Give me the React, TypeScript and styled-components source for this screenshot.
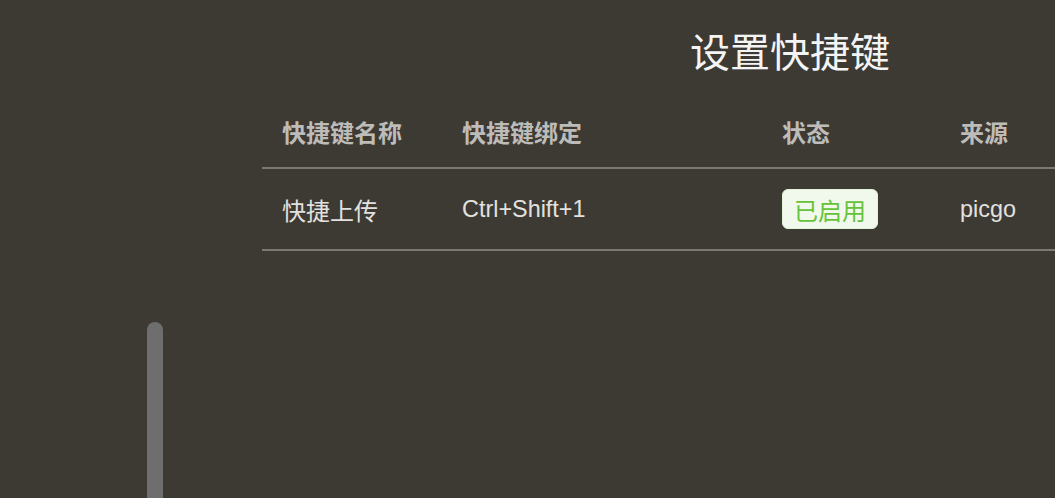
import React from "react";
import styled, { createGlobalStyle } from "styled-components";

const Global = createGlobalStyle`
  html, body { margin: 0; padding: 0; background: #3d3a34; overflow: hidden; }
  body { font-family: "Liberation Sans", "Noto Sans CJK SC", sans-serif; }
`;

const Page = styled.div`
  display: flex;
  width: 1055px;
  height: 498px;
  overflow: hidden;
  background: #3d3a34;
`;

const Sidebar = styled.aside`
  flex: 0 0 262px;
  display: flex;
  padding: 322px 0 0 147px;
  box-sizing: border-box;
`;

const ScrollThumb = styled.div`
  width: 16px;
  height: 220px;
  border-radius: 8px 8px 0 0;
  background: #6e6e6e;
`;

const Main = styled.main`
  flex: 0 0 1056px;
  display: flex;
  flex-direction: column;
`;

const Title = styled.h1`
  margin: 0;
  padding-top: 26px;
  height: 96px;
  box-sizing: border-box;
  text-align: center;
  font-family: "Noto Sans CJK SC", sans-serif;
  font-weight: 400;
  font-size: 40px;
  line-height: 48px;
  color: #f4f4f4;
`;

const Row = styled.div<{ $head?: boolean }>`
  display: grid;
  grid-template-columns: 180px 320px 178px 1fr;
  align-items: center;
  height: ${(p) => (p.$head ? "73px" : "82px")};
  border-bottom: 2px solid #7a7875;
  box-sizing: border-box;
`;

const Cell = styled.div<{ $head?: boolean; $latin?: boolean }>`
  padding-left: 20px;
  font-size: ${(p) => (p.$latin ? "23.4px" : "24px")};
  font-weight: ${(p) => (p.$head ? 700 : 400)};
  color: ${(p) => (p.$head ? "#bdbcb9" : "#e2e1df")};
  white-space: nowrap;
`;

const Tag = styled.span`
  display: inline-flex;
  align-items: center;
  justify-content: center;
  width: 96px;
  height: 40px;
  box-sizing: border-box;
  border: 1px solid #e1f3d8;
  border-radius: 6px;
  background: #f0f9eb;
  color: #67c23a;
  font-size: 24px;
  font-family: "Noto Sans CJK SC", sans-serif;
`;

export default function App() {
  return (
    <>
      <Global />
      <Page>
        <Sidebar>
          <ScrollThumb />
        </Sidebar>
        <Main>
          <Title>设置快捷键</Title>
          <Row $head>
            <Cell $head>快捷键名称</Cell>
            <Cell $head>快捷键绑定</Cell>
            <Cell $head>状态</Cell>
            <Cell $head>来源</Cell>
          </Row>
          <Row>
            <Cell>快捷上传</Cell>
            <Cell $latin>Ctrl+Shift+1</Cell>
            <Cell>
              <Tag>已启用</Tag>
            </Cell>
            <Cell $latin>picgo</Cell>
          </Row>
        </Main>
      </Page>
    </>
  );
}
